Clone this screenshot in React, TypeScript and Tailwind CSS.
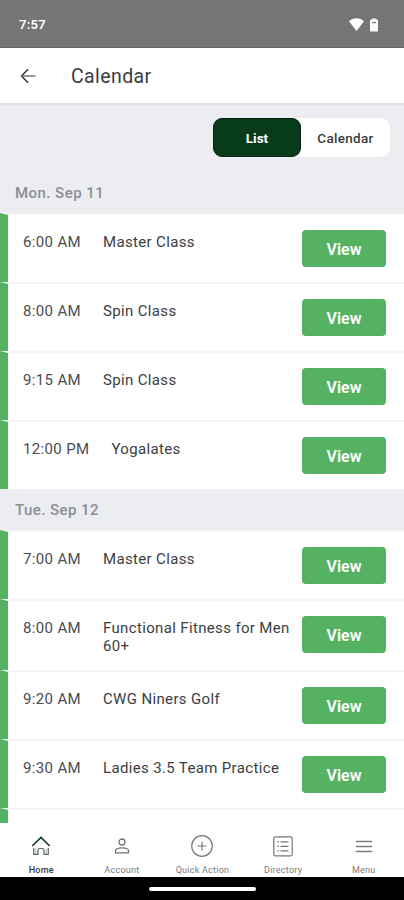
import React from 'react';

type ClassItem = { time: string; title: string };
type Day = { label: string; items: ClassItem[] };

const DAYS: Day[] = [
  {
    label: 'Mon. Sep 11',
    items: [
      { time: '6:00 AM', title: 'Master Class' },
      { time: '8:00 AM', title: 'Spin Class' },
      { time: '9:15 AM', title: 'Spin Class' },
      { time: '12:00 PM', title: 'Yogalates' },
    ],
  },
  {
    label: 'Tue. Sep 12',
    items: [
      { time: '7:00 AM', title: 'Master Class' },
      { time: '8:00 AM', title: 'Functional Fitness for Men 60+' },
      { time: '9:20 AM', title: 'CWG Niners Golf' },
      { time: '9:30 AM', title: 'Ladies 3.5 Team Practice' },
    ],
  },
];

const HomeIcon = () => (
  <svg width="20" height="22" viewBox="0 0 20 22" fill="none" stroke="#5d6963" strokeWidth="1.200">
    <path d="M1.200 11 10 2.500l8.800 8.500" stroke="#12402a" strokeWidth="1.700" />
    <path d="M2.700 13v6.300H7v-4.200q0-1.600 1.600-1.600h2.800q1.600 0 1.600 1.600v4.200h4.300V13" />
    <path d="M4.800 13.500v5.500M15.200 13.500v5.500" strokeWidth="0.500" />
  </svg>
);

const AccountIcon = () => (
  <svg width="20" height="22" viewBox="0 0 20 22" fill="none" stroke="#6f737b" strokeWidth="1.300">
    <circle cx="10" cy="7" r="3" />
    <path d="M3.500 17.800v-2c0-1.900 2.800-2.900 6.500-2.900s6.500 1 6.500 2.900v2z" />
  </svg>
);

const QuickActionIcon = () => (
  <svg width="24" height="24" viewBox="0 0 24 24" fill="none" stroke="#74777f" strokeWidth="1.200">
    <circle cx="12" cy="12" r="10.300" />
    <path d="M12 7.500v9M7.500 12h9" />
  </svg>
);

const DirectoryIcon = () => (
  <svg width="20" height="22" viewBox="0 0 20 22" fill="none" stroke="#74777f" strokeWidth="1.200">
    <rect x="0.800" y="1.800" width="18.400" height="19" rx="1.500" />
    <path d="M4.500 6.800H6M4.500 11.300H6M4.500 15.800H6M7.500 6.800h8M7.500 11.300h8M7.500 15.800h8" />
  </svg>
);

const MenuIcon = () => (
  <svg width="18" height="22" viewBox="0 0 18 22" fill="none" stroke="#7b7e85" strokeWidth="1.500">
    <path d="M.8 6.500h16.400M.8 11.500h16.400M.8 16.500h16.400" />
  </svg>
);

const TABS = [
  { label: 'Home', icon: <HomeIcon />, active: true },
  { label: 'Account', icon: <AccountIcon /> },
  { label: 'Quick Action', icon: <QuickActionIcon /> },
  { label: 'Directory', icon: <DirectoryIcon /> },
  { label: 'Menu', icon: <MenuIcon /> },
];

const StatusBar = () => (
  <div className="flex h-12 shrink-0 items-center justify-between border-b border-[#686868] bg-[#757575] pt-[2px] pr-[26px] pl-[19px]">
    <span className="text-[13px] font-semibold tracking-[0.3px] text-white">7:57</span>
    <div className="flex items-center gap-[6px]">
      <svg width="15" height="13" viewBox="0 0 15 13" fill="#fff">
        <path d="M7.500 13 0 3.300C2 1.200 4.600.2 7.500.2s5.500 1 7.500 3.100z" />
      </svg>
      <svg width="8" height="14" viewBox="0 0 8 14">
        <path fill="#fff" d="M2.500.5h3L8 2.600v9.900c0 .6-.4 1-1 1H1c-.6 0-1-.4-1-1V2.600z" />
        <path fill="#858585" d="M2 3.800h4v1.500H2z" />
      </svg>
    </div>
  </div>
);

const ClassRow: React.FC<{ item: ClassItem }> = ({ item }) => (
  <div className="flex min-h-[69px] items-start border-t-2 border-l-8 border-t-[#f4f4f5] border-l-[#55b263] bg-white pr-[18px] pb-[15px] pl-[15px]">
    <span className="mt-[18px] mr-[22px] text-[15px] leading-[18px] tracking-[0.35px] whitespace-nowrap text-[#4b4d51]">
      {item.time}
    </span>
    <span className="mt-[18px] flex-1 text-[15px] leading-[18px] tracking-[0.35px] text-[#3c3e42]">
      {item.title}
    </span>
    <button className="mt-[15px] ml-3 h-[37px] w-[84px] shrink-0 rounded-[4px] bg-[#55b263] pt-[2px] text-base font-semibold text-white">
      View
    </button>
  </div>
);

export default function App() {
  return (
    <div className="flex h-[900px] w-[404px] flex-col overflow-hidden bg-white font-['Roboto',sans-serif]">
      <StatusBar />

      <header className="flex h-[55px] shrink-0 items-center pt-px pl-[20px]">
        <svg width="17" height="16" viewBox="0 0 17 16" fill="none" stroke="#333" strokeWidth="1.500">
          <path d="M8 1.200 1.500 8 8 14.800" />
          <path d="M1.500 8h14" stroke="#777" />
        </svg>
        <h1 className="mt-px ml-[34px] text-[19.500px] tracking-[0.4px] text-[#3a3c40]">Calendar</h1>
      </header>

      <main className="min-h-0 flex-1 overflow-hidden border-t-2 border-[#e1e2e6] bg-[#ecedf1]">
        <div className="flex h-[67px] justify-end pt-[13px] pr-[14px]">
          <div className="flex h-[39px] rounded-[9px] bg-white text-[13.500px]">
            <button className="w-[88px] rounded-[9px] border border-[#0b2112] bg-[#073b1a] pt-px font-bold text-white">List</button>
            <button className="w-[89px] pt-px font-medium tracking-[0.3px] text-[#3a3c42]">Calendar</button>
          </div>
        </div>

        {DAYS.map((day) => (
          <section key={day.label}>
            <h2 className="flex h-[41px] items-center pt-[2px] pl-[15px] text-[15px] font-medium tracking-[0.45px] text-[#8b8d98]">
              {day.label}
            </h2>
            {day.items.map((item) => (
              <ClassRow key={item.time} item={item} />
            ))}
          </section>
        ))}
        <div className="h-[69px] border-t-2 border-l-8 border-t-[#f4f4f5] border-l-[#55b263] bg-white" />
      </main>

      <nav className="grid h-[54px] shrink-0 grid-cols-5 bg-white pl-px">
        {TABS.map((tab) => (
          <div key={tab.label} className="flex flex-col items-center pt-[11px]">
            <span className="flex h-6 items-center">{tab.icon}</span>
            <span
              className={`mt-[6px] text-[9px] leading-[12px] tracking-[0.25px] whitespace-nowrap ${
                tab.active ? 'font-medium text-[#34383a]' : 'text-[#777a80]'
              }`}
            >
              {tab.label}
            </span>
          </div>
        ))}
      </nav>

      <div className="flex h-[23px] shrink-0 items-center justify-center bg-black">
        <div className="h-[4px] w-[107px] rounded-full bg-white" />
      </div>
    </div>
  );
}
